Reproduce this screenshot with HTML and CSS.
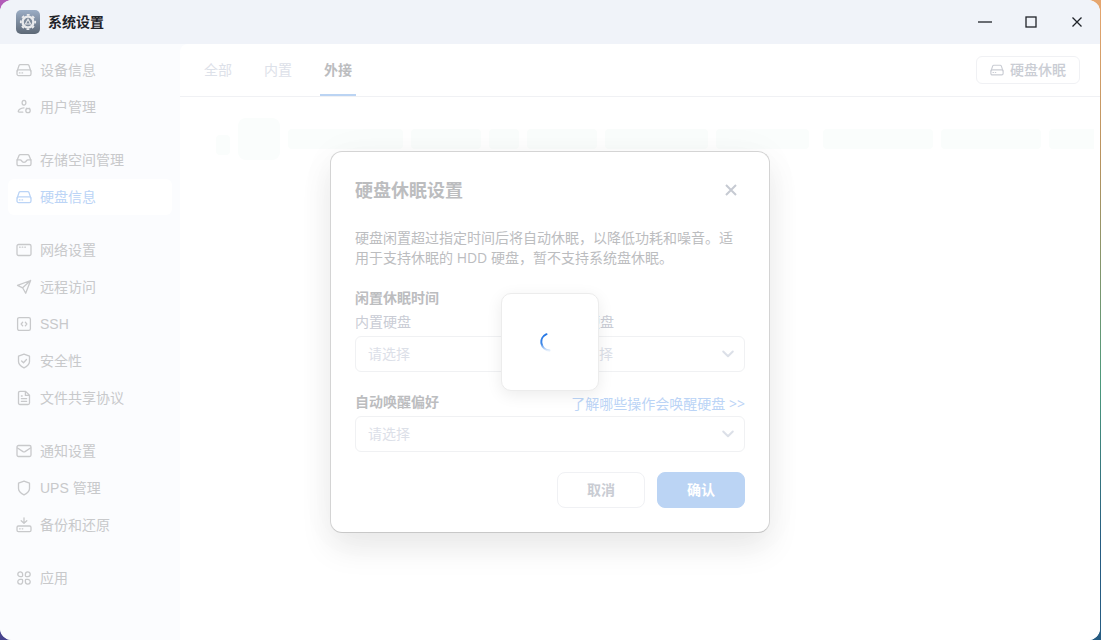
FILE: index.html
```
<!DOCTYPE html>
<html lang="zh-CN">
<head>
    <meta charset="UTF-8">
    <meta name="viewport" content="width=device-width, initial-scale=1.0">
    <title>系统设置</title>
    <link rel="stylesheet" href="styles.css">
</head>
<body>
    <!-- 图标 -->
    <svg class="sprite" aria-hidden="true">
        <symbol id="i-disk" viewBox="0 0 16 16">
            <path d="M1.2 9 3 3.6Q3.4 2.6 4.4 2.6h7.2q1 0 1.4 1L14.8 9"/>
            <rect x="1" y="7.8" width="14" height="5.8" rx="1.6"/>
            <path d="M3.4 10.9h.6M6 10.9h.6"/>
        </symbol>
        <symbol id="i-user" viewBox="0 0 16 16">
            <ellipse cx="8" cy="3.7" rx="1.9" ry="2.4"/>
            <path d="M8 8.8C5 9 2.8 10.2 2.3 12.2q-.1 1 .8 1h3.7"/>
            <circle cx="12" cy="11.5" r="2.2"/>
            <path d="M10.4 9.3l.4.5M13.6 9.3l-.4.5"/>
        </symbol>
        <symbol id="i-storage" viewBox="0 0 16 16">
            <path d="M1 8.4 3 3.6Q3.4 2.6 4.4 2.6h7.2q1 0 1.4 1l2 4.8V12q0 1.6-1.6 1.6H2.6Q1 13.6 1 12z"/>
            <path d="M1 7.8h3.2q.8 0 1.2.8.9 1.8 2.6 1.8t2.6-1.8q.4-.8 1.2-.8H15"/>
        </symbol>
        <symbol id="i-network" viewBox="0 0 16 16">
            <rect x="1" y="2.5" width="14" height="11" rx="1.5"/>
            <path d="M3.6 5.2h.6M6.2 5.2h.6M8.8 5.2h.6"/>
        </symbol>
        <symbol id="i-send" viewBox="0 0 16 16">
            <path d="M14.6 1.5 1.5 6.3l5.1 2.5 3.1 5.5zM6.6 8.8l8-7.3"/>
        </symbol>
        <symbol id="i-ssh" viewBox="0 0 16 16">
            <rect x="1.6" y="1.6" width="12.8" height="12.8" rx="1.6"/>
            <path d="M6.7 6.2 5.2 8l1.5 1.8M9.3 6.2 10.8 8 9.3 9.8"/>
        </symbol>
        <symbol id="i-shield" viewBox="0 0 16 16">
            <path d="M8 1.2 2.5 3.2v5.2c0 2.8 2.3 4.8 5.5 6.4 3.2-1.6 5.5-3.6 5.5-6.4V3.2z"/>
        </symbol>
        <symbol id="i-check" viewBox="0 0 16 16">
            <path d="m5.6 8 1.9 1.8 3-3.3"/>
        </symbol>
        <symbol id="i-file" viewBox="0 0 16 16">
            <path d="M4 1.4h5.6l3.9 3.8V13q0 1.5-1.5 1.5H4q-1.5 0-1.5-1.5V2.9Q2.5 1.4 4 1.4zM9.4 1.6v3.8h3.9M5.4 6h.8M5.4 8.7h5.2M5.4 11.4h5.2"/>
        </symbol>
        <symbol id="i-mail" viewBox="0 0 16 16">
            <rect x="1" y="2.5" width="14" height="11" rx="1.5"/>
            <path d="m1.5 5 5.5 3.6q1 .6 2 0L14.5 5"/>
        </symbol>
        <symbol id="i-backup" viewBox="0 0 16 16">
            <path d="M8 .8v5.4M5.2 3.7 8 6.3l2.8-2.6"/>
            <rect x="1" y="9" width="14" height="5.6" rx="1.4"/>
            <path d="M3.6 11.8h.6M6.2 11.8h.6"/>
        </symbol>
        <symbol id="i-apps" viewBox="0 0 16 16">
            <path d="M6.6 5.8q0 .8-.8.8H4.2A2.4 2.4 0 1 1 6.6 4.2zM9.4 5.8q0 .8.8.8h1.6A2.4 2.4 0 1 0 9.4 4.2zM6.6 10.2q0-.8-.8-.8H4.2a2.4 2.4 0 1 0 2.4 2.4zM9.4 10.2q0-.8.8-.8h1.6a2.4 2.4 0 1 1-2.4 2.4z"/>
        </symbol>
        <symbol id="i-chevron" viewBox="0 0 16 16">
            <path d="m3.2 5.5 4.8 4.8 4.8-4.8"/>
        </symbol>
    </svg>

    <div class="window">
        <header class="titlebar">
            <svg class="app-icon" viewBox="0 0 24 24" aria-hidden="true">
                <defs>
                    <linearGradient id="app-bg" x1="0" y1="0" x2="0" y2="1">
                        <stop offset="0" stop-color="#9badc5"/>
                        <stop offset="1" stop-color="#5d6876"/>
                    </linearGradient>
                </defs>
                <rect width="24" height="24" rx="5" fill="url(#app-bg)"/>
                <circle cx="12" cy="12" r="7.2" fill="none" stroke="#e9eaec" stroke-width="1.8" stroke-dasharray="2.8 2.855" stroke-dashoffset="1.4"/>
                <circle cx="12" cy="12" r="5.4" fill="#7c8999" stroke="#e9eaec" stroke-width="2.4"/>
                <path d="M12 9.2 9.4 14h5.2z" fill="none" stroke="#e9eaec" stroke-width="1.1"/>
            </svg>
            <h1 class="app-title">系统设置</h1>
            <div class="window-controls">
                <button type="button" aria-label="最小化"><svg viewBox="0 0 16 16"><path d="M1 8h14"/></svg></button>
                <button type="button" aria-label="最大化"><svg viewBox="0 0 16 16"><rect x="3" y="3" width="10" height="10"/></svg></button>
                <button type="button" aria-label="关闭"><svg viewBox="0 0 16 16"><path d="m3.5 3.5 9 9M12.5 3.5l-9 9"/></svg></button>
            </div>
        </header>

        <div class="content">
            <nav class="sidebar">
                <div class="nav-group">
                    <a href="#"><svg class="icon"><use href="#i-disk"/></svg>设备信息</a>
                    <a href="#"><svg class="icon"><use href="#i-user"/></svg>用户管理</a>
                </div>
                <div class="nav-group">
                    <a href="#"><svg class="icon"><use href="#i-storage"/></svg>存储空间管理</a>
                    <a href="#" class="active"><svg class="icon"><use href="#i-disk"/></svg>硬盘信息</a>
                </div>
                <div class="nav-group">
                    <a href="#"><svg class="icon"><use href="#i-network"/></svg>网络设置</a>
                    <a href="#"><svg class="icon"><use href="#i-send"/></svg>远程访问</a>
                    <a href="#"><svg class="icon"><use href="#i-ssh"/></svg>SSH</a>
                    <a href="#"><svg class="icon"><use href="#i-shield"/><use href="#i-check"/></svg>安全性</a>
                    <a href="#"><svg class="icon"><use href="#i-file"/></svg>文件共享协议</a>
                </div>
                <div class="nav-group">
                    <a href="#"><svg class="icon"><use href="#i-mail"/></svg>通知设置</a>
                    <a href="#"><svg class="icon"><use href="#i-shield"/></svg>UPS 管理</a>
                    <a href="#"><svg class="icon"><use href="#i-backup"/></svg>备份和还原</a>
                </div>
                <div class="nav-group">
                    <a href="#"><svg class="icon"><use href="#i-apps"/></svg>应用</a>
                </div>
            </nav>

            <main class="main">
                <div class="toolbar">
                    <div class="tabs">
                        <button type="button">全部</button>
                        <button type="button">内置</button>
                        <button type="button" class="active">外接</button>
                    </div>
                    <button type="button" class="sleep-button"><svg class="icon"><use href="#i-disk"/></svg>硬盘休眠</button>
                </div>
                <!-- 加载中的骨架屏 -->
                <div class="skeleton">
                    <span class="bone check"></span>
                    <span class="bone thumb"></span>
                    <span class="bone w115"></span>
                    <span class="bone w70"></span>
                    <span class="bone w30"></span>
                    <span class="bone w70"></span>
                    <span class="bone w103"></span>
                    <span class="bone w93"></span>
                    <span class="bone w110"></span>
                    <span class="bone w100"></span>
                    <span class="bone w100"></span>
                </div>
            </main>

            <div class="overlay">
                <form class="dialog">
                    <div class="dialog-header">
                        <h2>硬盘休眠设置</h2>
                        <button type="button" class="close" aria-label="关闭"><svg viewBox="0 0 16 16"><path d="m3 3 10 10M13 3 3 13"/></svg></button>
                    </div>
                    <p class="desc">硬盘闲置超过指定时间后将自动休眠，以降低功耗和噪音。适用于支持休眠的 HDD 硬盘，暂不支持系统盘休眠。</p>
                    <h3>闲置休眠时间</h3>
                    <div class="columns">
                        <div class="field">
                            <label for="internal">内置硬盘</label>
                            <div class="select">
                                <select id="internal"><option>请选择</option></select>
                                <svg class="icon"><use href="#i-chevron"/></svg>
                            </div>
                        </div>
                        <div class="field">
                            <label for="external">外接硬盘</label>
                            <div class="select">
                                <select id="external"><option>请选择</option></select>
                                <svg class="icon"><use href="#i-chevron"/></svg>
                            </div>
                        </div>
                    </div>
                    <div class="wake-row">
                        <label for="wake">自动唤醒偏好</label>
                        <a href="#">了解哪些操作会唤醒硬盘 &gt;&gt;</a>
                    </div>
                    <div class="select">
                        <select id="wake"><option>请选择</option></select>
                        <svg class="icon"><use href="#i-chevron"/></svg>
                    </div>
                    <div class="actions">
                        <button type="button">取消</button>
                        <button type="submit" class="primary">确认</button>
                    </div>
                </form>
            </div>

            <div class="overlay">
                <div class="loader" role="status" aria-label="加载中">
                    <svg viewBox="0 0 20 20">
                        <defs>
                            <linearGradient id="spin" x1="0" y1="0" x2="0" y2="1">
                                <stop offset="0" stop-color="#2376e5"/>
                                <stop offset=".6" stop-color="#3f88e8"/>
                                <stop offset="1" stop-color="#3f88e8" stop-opacity=".15"/>
                            </linearGradient>
                        </defs>
                        <path d="M6.5 2.2A8.5 8.5 0 0 0 9.5 18.5" stroke="url(#spin)"/>
                    </svg>
                </div>
            </div>
        </div>
    </div>
</body>
</html>
```
FILE: styles.css
```
* {
    box-sizing: border-box;
}
body {
    margin: 0;
    padding-right: 1px;
    min-height: 100vh;
    display: flex;
    font-family: "Liberation Sans", "Noto Sans CJK SC", sans-serif;
    font-size: 14px;
    line-height: 20px;
    color: #c8c9cb;
    /* 桌面壁纸 */
    background:
        linear-gradient(#b25bb8, #47448e) left / 50% 100% no-repeat,
        linear-gradient(#e6a66f, #b8935f 25%, #4c9a7c 60%, #265c82 85%) right / 50% 100% no-repeat;
}
h1, h2, h3, p {
    margin: 0;
}
button, select {
    font: inherit;
    color: inherit;
    background: none;
    border: none;
    padding: 0;
    cursor: pointer;
}
a {
    color: inherit;
    text-decoration: none;
}
svg {
    fill: none;
    stroke: currentColor;
    flex: none;
}
.sprite {
    position: absolute;
    width: 0;
    height: 0;
}
.icon {
    width: 16px;
    height: 16px;
    stroke-width: 1.3;
    stroke-linecap: round;
    stroke-linejoin: round;
}
.window {
    flex: 1;
    min-width: 0;
    display: flex;
    flex-direction: column;
    border-radius: 12px;
    overflow: hidden;
    background: #fff;
}

/* 标题栏 */
.titlebar {
    display: flex;
    align-items: center;
    gap: 8px;
    height: 44px;
    padding-left: 16px;
    background: #f0f3f9;
    color: #1f2329;
}
.app-icon {
    width: 24px;
    height: 24px;
    stroke: none;
}
.app-title {
    font-size: 14px;
    font-weight: bold;
}
.window-controls {
    display: flex;
    margin-left: auto;
}
.window-controls button {
    width: 46px;
    height: 44px;
    display: grid;
    place-items: center;
}
.window-controls svg {
    width: 16px;
    height: 16px;
    stroke-width: 1.3;
}

.content {
    flex: 1;
    display: grid;
    grid-template-columns: 180px minmax(0, 1fr);
    background: #fbfcfe;
}

/* 侧边栏 */
.sidebar {
    grid-area: 1 / 1;
    display: flex;
    flex-direction: column;
    gap: 17px;
    padding: 8px;
}
.nav-group {
    display: flex;
    flex-direction: column;
    gap: 1px;
}
.nav-group a {
    display: flex;
    align-items: center;
    gap: 8px;
    height: 36px;
    padding: 0 8px;
    border-radius: 6px;
}
.nav-group .active {
    background: #fff;
    color: #bbd4f6;
}

/* 主区域 */
.main {
    grid-area: 1 / 2;
    background: #fff;
    border-top-left-radius: 8px;
}
.toolbar {
    display: flex;
    justify-content: space-between;
    align-items: center;
    height: 53px;
    padding: 0 20px;
    border-bottom: 1px solid #f0f1f4;
}
.tabs {
    display: flex;
    gap: 24px;
    color: #dde1e9;
}
.tabs button {
    height: 52px;
    padding: 0 4px;
    border: solid transparent;
    border-width: 2px 0;
}
.tabs .active {
    color: #bcbdbf;
    font-weight: bold;
    border-bottom-color: #bbd4f3;
}
.sleep-button {
    display: flex;
    align-items: center;
    justify-content: center;
    gap: 6px;
    width: 104px;
    height: 28px;
    border: 1px solid #f0f1f4;
    border-radius: 6px;
    color: #cacdd4;
    font-weight: 500;
}
.sleep-button .icon {
    width: 14px;
    height: 14px;
}
.skeleton {
    display: flex;
    align-items: center;
    gap: 8px;
    margin: 21px 6px 0 36px;
    overflow: hidden;
}
.bone {
    flex: none;
    height: 20px;
    border-radius: 4px;
    background: #fafdfc;
}
.check {
    width: 14px;
    margin-top: 12px;
}
.thumb {
    width: 42px;
    height: 42px;
    border-radius: 8px;
}
.w30 { width: 30px; }
.w70 { width: 70px; }
.w93 { width: 93px; margin-right: 6px; }
.w100 { width: 100px; }
.w103 { width: 103px; }
.w110 { width: 110px; }
.w115 { width: 115px; }

/* 弹窗 */
.overlay {
    grid-area: 1 / 1 / 2 / 3;
    display: grid;
    place-items: center;
    z-index: 1;
}
.dialog {
    width: 440px;
    padding: 24px;
    border: 1px solid #d4d4d4;
    border-bottom-color: #c8c8c8;
    border-radius: 12px;
    background: #fff;
    color: #bcbdbf;
    font-family: "Open Sans", "Noto Sans CJK SC", sans-serif;
    box-shadow: 0 16px 32px rgba(0, 0, 0, 0.08), 0 1px 40px rgba(0, 0, 0, 0.03);
}
.dialog-header {
    display: flex;
    justify-content: space-between;
    align-items: center;
    margin-bottom: 24px;
}
.dialog h2 {
    font-size: 18px;
    line-height: 28px;
}
.close {
    width: 28px;
    height: 28px;
    display: grid;
    place-items: center;
    color: #c6cad2;
}
.close svg {
    width: 16px;
    height: 16px;
    stroke-width: 2;
}
.desc {
    margin-bottom: 20px;
}
.dialog h3 {
    font-size: 14px;
    margin-bottom: 4px;
}
.columns {
    display: grid;
    grid-template-columns: 1fr 1fr;
    gap: 16px;
    margin-bottom: 20px;
}
.field {
    display: flex;
    flex-direction: column;
    gap: 4px;
    color: #c9ccd5;
}
.select {
    display: grid;
    align-items: center;
    color: #dce0e8;
}
.select select {
    grid-area: 1 / 1;
    width: 100%;
    height: 36px;
    padding: 0 36px 0 12px;
    border: 1px solid #f0f1f3;
    border-radius: 6px;
    appearance: none;
}
.select .icon {
    grid-area: 1 / 1;
    justify-self: end;
    margin-right: 9px;
    stroke-width: 2;
    pointer-events: none;
}
.wake-row {
    display: flex;
    justify-content: space-between;
    align-items: flex-end;
    margin-bottom: 4px;
}
.wake-row label {
    font-weight: bold;
}
.wake-row a {
    line-height: 16px;
    color: #bbd4f6;
}
.actions {
    display: flex;
    justify-content: flex-end;
    gap: 12px;
    margin-top: 20px;
}
.actions button {
    width: 88px;
    height: 36px;
    border: 1px solid #f0f1f4;
    border-radius: 8px;
    color: #c9ccd3;
    font-weight: bold;
}
.actions .primary {
    background: #bbd4f4;
    border-color: #bbd4f4;
    color: #fff;
}

/* 加载提示 */
.loader {
    display: grid;
    place-items: center;
    width: 98px;
    height: 98px;
    border: 1px solid #ececec;
    border-radius: 10px;
    background: #fff;
    box-shadow: 0 4px 16px rgba(0, 0, 0, 0.08);
}
.loader svg {
    width: 20px;
    height: 20px;
    stroke-width: 2;
    stroke-linecap: round;
}
```
